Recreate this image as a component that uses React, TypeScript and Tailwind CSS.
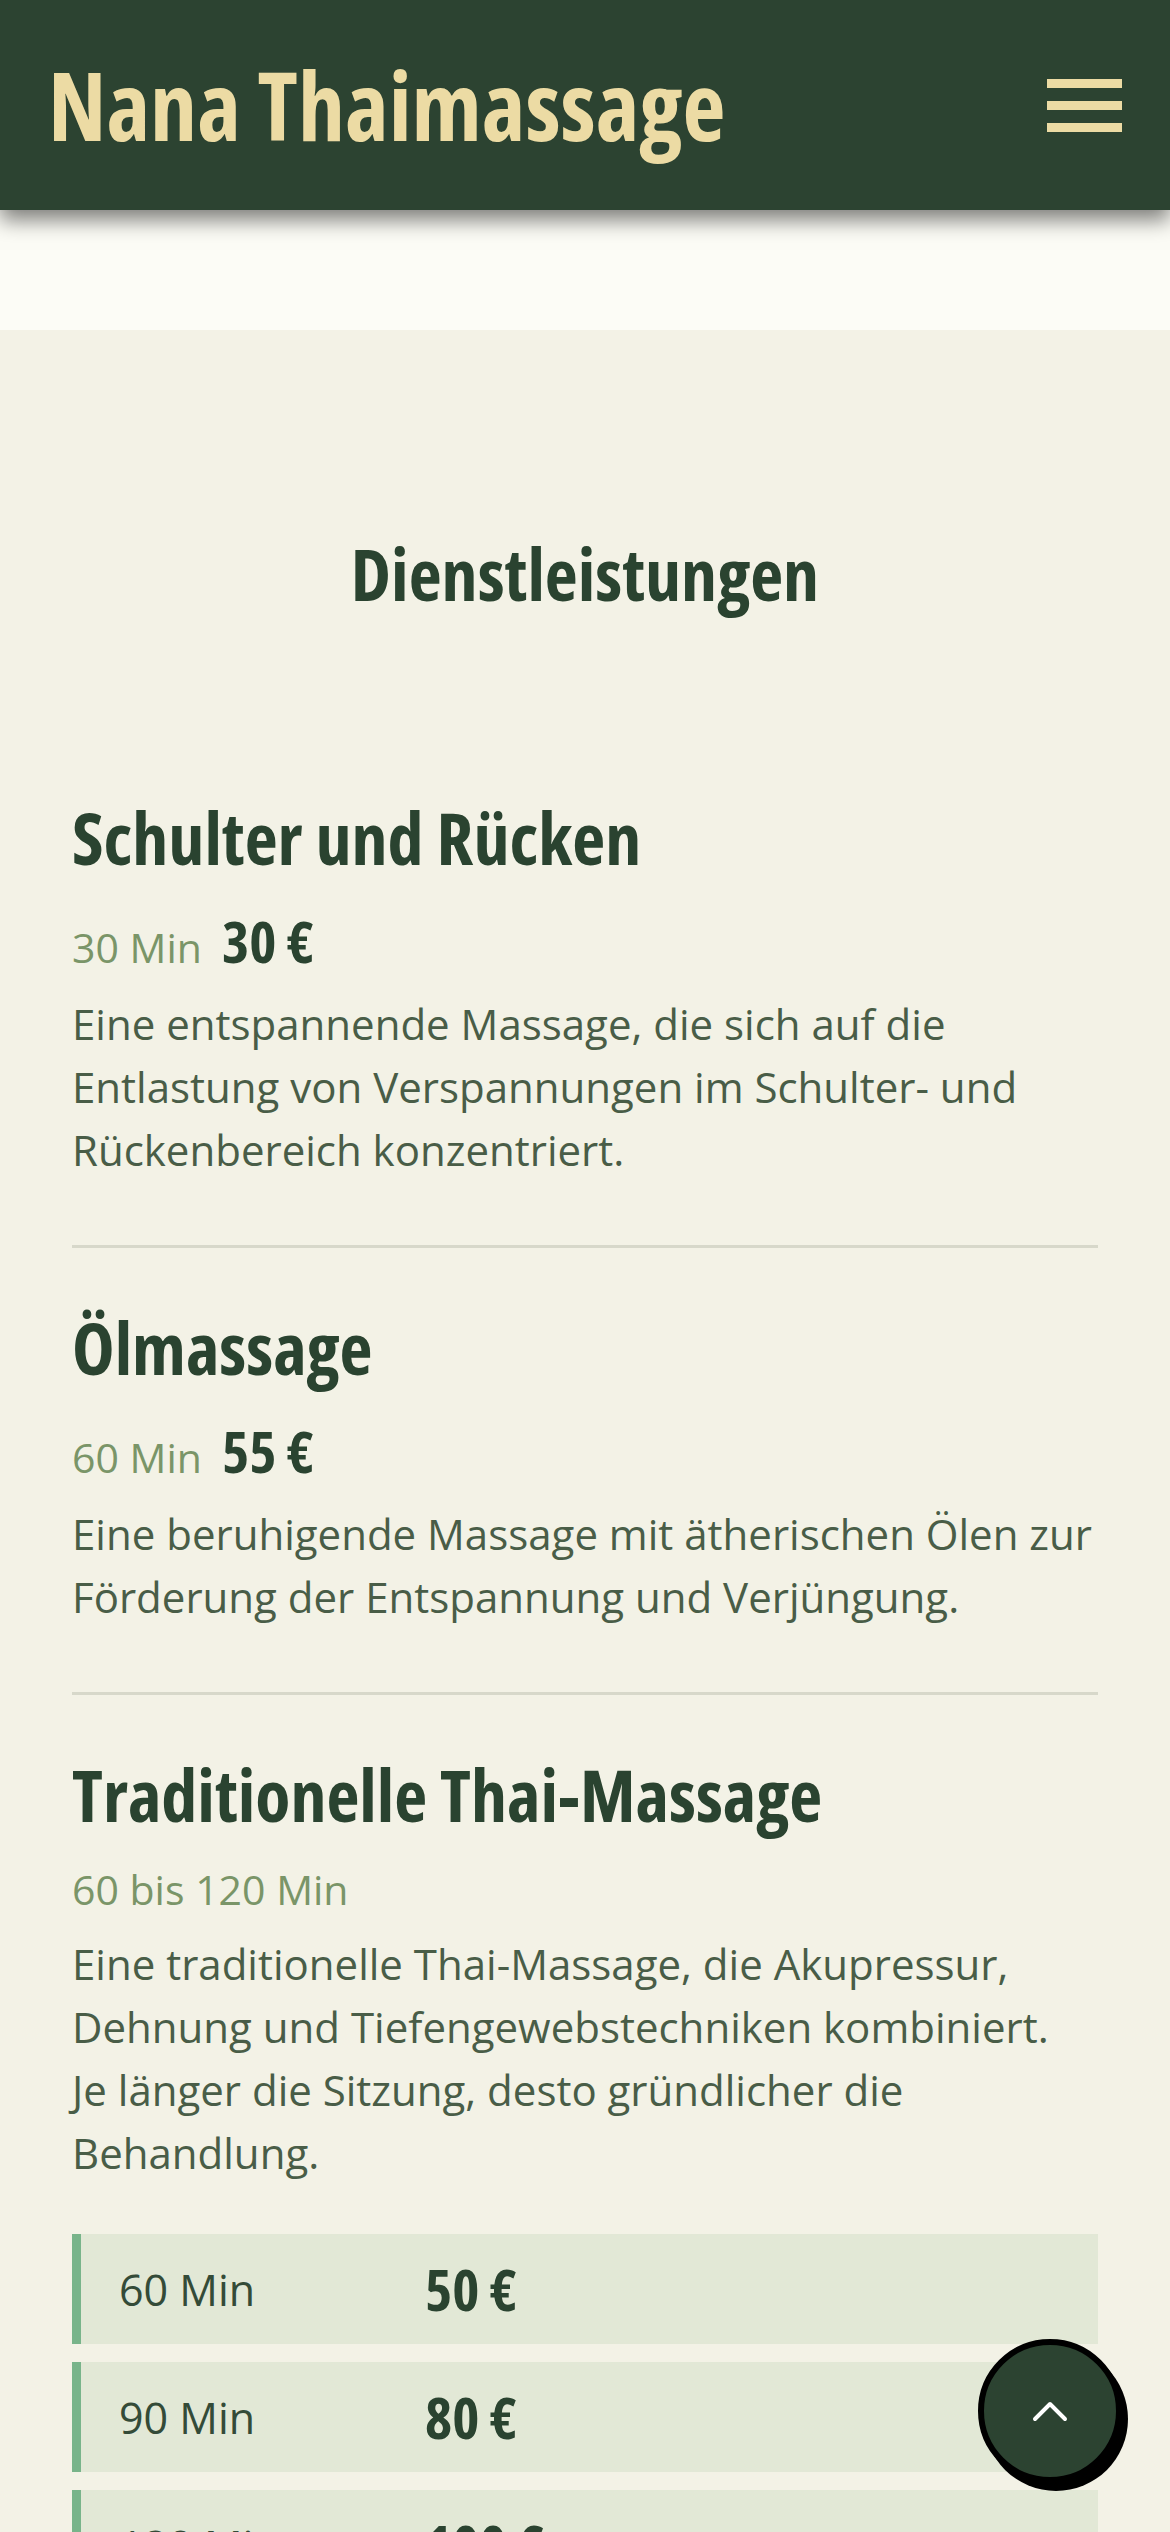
const services = [
  {
    title: "Schulter und Rücken",
    duration: "30 Min",
    price: "30 €",
    text: "Eine entspannende Massage, die sich auf die Entlastung von Verspannungen im Schulter- und Rückenbereich konzentriert.",
  },
  {
    title: "Ölmassage",
    duration: "60 Min",
    price: "55 €",
    text: "Eine beruhigende Massage mit ätherischen Ölen zur Förderung der Entspannung und Verjüngung.",
  },
  {
    title: "Traditionelle Thai-Massage",
    duration: "60 bis 120 Min",
    text: "Eine traditionelle Thai-Massage, die Akupressur, Dehnung und Tiefengewebstechniken kombiniert. Je\u00A0länger die Sitzung, desto gründlicher die Behandlung.",
    options: [
      { duration: "60 Min", price: "50 €" },
      { duration: "90 Min", price: "80 €" },
      { duration: "120 Min", price: "100 €" },
    ],
  },
];

type Service = (typeof services)[number];

const ServiceItem = ({ service, last }: { service: Service; last: boolean }) => {
  return (
    <div className={last ? "pt-[56px]" : "pt-[56px] pb-[64px] border-b-[3px] border-[#d7d8ca] first:pt-0"}>
      <h3 className="text-[72px] leading-[86px] font-bold font-stretch-[75%] text-[#2a4330]">
        {service.title}
      </h3>
      <div className="mt-[32px] flex items-baseline gap-[20px] leading-none">
        <span className="text-[41px] font-stretch-[90%] text-[#7a9568]">{service.duration}</span>
        {service.price && (
          <span className="text-[58px] font-bold font-stretch-[75%] text-[#2a4330]">{service.price}</span>
        )}
      </div>
      <p className="mt-[22px] text-[42px] leading-[63px] font-stretch-[90%] text-[#495d47]">
        {service.text}
      </p>
      {service.options && (
        <div className="mt-[50px] flex flex-col gap-[18px]">
          {service.options.map((o) => (
            <div
              key={o.duration}
              className="h-[110px] flex items-center pl-[38px] bg-[#e2e8d6] border-l-[9px] border-[#78b48a]"
            >
              <span className="w-[306px] text-[43px] leading-none font-stretch-[90%] text-[#344b38]">
                {o.duration}
              </span>
              <span className="text-[58px] leading-none font-bold font-stretch-[75%] text-[#2a4330]">
                {o.price}
              </span>
            </div>
          ))}
        </div>
      )}
    </div>
  );
};

export default function App() {
  return (
    <div className="min-h-screen bg-[#f3f2e6] font-['Open_Sans',sans-serif]">
      <header className="relative z-10 h-[210px] bg-[#2c4331] flex items-center justify-between pl-[48px] pr-[48px] shadow-[0_10px_20px_rgba(0,0,0,0.5)]">
        <span className="text-[94px] leading-none font-bold font-stretch-[75%] text-[#ecdba4]">
          Nana Thaimassage
        </span>
        <button className="flex flex-col gap-[13px]" aria-label="Menü">
          <span className="block w-[75px] h-[9px] bg-[#ecdba4]" />
          <span className="block w-[75px] h-[9px] bg-[#ecdba4]" />
          <span className="block w-[75px] h-[9px] bg-[#ecdba4]" />
        </button>
      </header>

      <div className="h-[120px] bg-[#fcfcf6]" />

      <section className="px-[72px] pt-[200px] pb-[120px]">
        <h2 className="text-center text-[72px] leading-[86px] font-bold font-stretch-[75%] text-[#2a4330]">
          Dienstleistungen
        </h2>
        <div className="mt-[178px]">
          {services.map((s, i) => (
            <ServiceItem key={s.title} service={s} last={i === services.length - 1} />
          ))}
        </div>
      </section>

      <button
        aria-label="Nach oben"
        className="fixed right-[48px] bottom-[49px] w-[144px] h-[144px] rounded-full border-[6px] border-black bg-[#2c4331] shadow-[6px_8px_0_#000] flex items-center justify-center"
      >
        <svg width="36" height="22" viewBox="0 0 36 22" fill="none">
          <polyline points="3,19 18,4 33,19" stroke="#ffffff" strokeWidth="4" strokeLinecap="round" strokeLinejoin="round" />
        </svg>
      </button>
    </div>
  );
}
